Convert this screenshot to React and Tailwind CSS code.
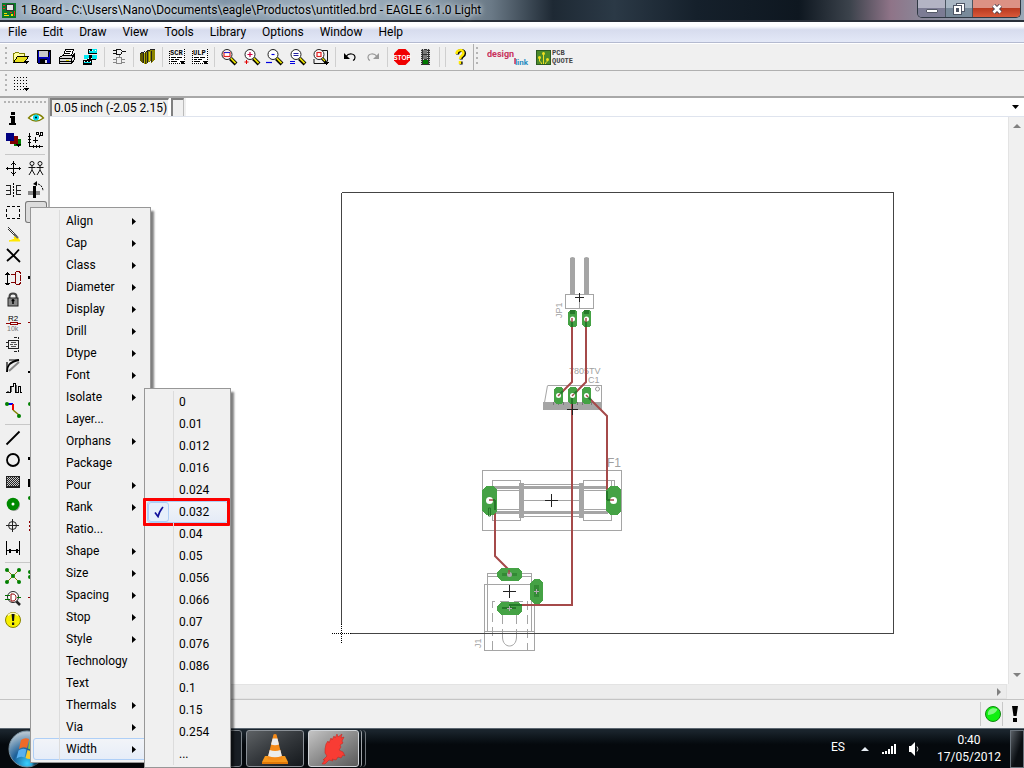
import React from "react";

/* ---------- icon helpers ---------- */

function Icon({ children, smooth }) {
  return (
    <svg
      viewBox="0 0 22 22"
      className="block size-[22px] shrink-0"
      shapeRendering={smooth ? "auto" : "crispEdges"}
      fill="none"
      stroke="none"
      aria-hidden="true"
    >
      {children}
    </svg>
  );
}

const Drop = ({ x = 15, y = 16 }) => (
  <path d={`M${x} ${y}h5v1h-1v1h-1v1h-1v-1h-1v-1h-1z`} fill="#000" />
);

function Magnifier({ children, badge }) {
  return (
    <Icon smooth>
      <path d="M12.500 12.500L18 18" stroke="#000" strokeWidth="4" />
      <path d="M12.700 12.200L17.600 17.100" stroke="#e8e000" strokeWidth="1.800" />
      <circle cx="9" cy="8.500" r="5" fill="#fff" stroke="#222" strokeWidth="1" />
      {children}
      {badge}
    </Icon>
  );
}

const ScriptIcon = ({ label }) => (
  <Icon>
    <rect x="3.500" y="3.500" width="15" height="14" fill="#fff" stroke="#000" strokeDasharray="1 1" />
    <rect x="4" y="3" width="14" height="7" fill="#f6f6f6" />
    <text x="4" y="9" fontSize="7" fontWeight="700" fontFamily="Liberation Mono, monospace" fill="#000">{label}</text>
    <path d="M5 11.500h5M11 11.500h5M5 13.500h3M9 13.500h4M5 15.500h6" stroke="#000" />
    <Drop x={14} y={15} />
  </Icon>
);

/* ---------- top tool bar icons ---------- */

const topTools = [
  { name: "Open", icon: (
    <Icon>
      <path d="M3.500 16V7.500h1l1-1h3l1 1h5v3" fill="#ffffa0" stroke="#808000" />
      <path d="M3.500 16.500l4-6h11l-4 6z" fill="#e8e020" stroke="#000" />
      <Drop x={14} y={15} />
    </Icon>) },
  { name: "Save", icon: (
    <Icon>
      <path d="M4 4h14v14H5l-1-1z" fill="#000" />
      <path d="M5 5h1v12H5zM16 6h1v11h-1zM6 11h10v1H6z" fill="#0000c0" />
      <rect x="6" y="5" width="9" height="6" fill="#c8c8c8" />
      <rect x="5" y="12" width="12" height="5" fill="#0000a0" />
      <rect x="7" y="13" width="7" height="4" fill="#000" />
      <rect x="12" y="14" width="2" height="3" fill="#ddd" />
    </Icon>) },
  { name: "Print", icon: (
    <Icon>
      <path d="M7.500 9.500l2-6h8l-2 6" fill="#fff" stroke="#000" />
      <path d="M10 5.500h5M9 7.500h5" stroke="#000" />
      <path d="M3.500 11.500l3-2h10l2-2v6l-3 4h-12z" fill="#d8d8d8" stroke="#000" />
      <path d="M3 12.500h12M4 15.500h11M15.500 12v5M16 11.500l2-2" stroke="#000" />
      <path d="M10 14h3v1h-3z" fill="#d8d000" />
    </Icon>) },
  { name: "CAM", icon: (
    <Icon>
      <path d="M9 3h9v5H9zM8 9h9v5H8zM4 14h9v5H4z" fill="#000" />
      <path d="M10 5h7v2h-7zM5 16h7v1H5z" fill="#00e8f0" />
      <path d="M5 9h5v4H5zM13 9h5v4h-5zM13 3h5v4h-5z" fill="#00e8f0" />
      <path d="M10 4h1v1h-1zM13 4h1v1h-1zM16 4h1v1h-1zM9 12h1v1H9zM12 12h1v1h-1zM5 15h1v1H5zM8 15h1v1H8zM11 15h1v1h-1z" fill="#fff" />
    </Icon>) },
  null,
  { name: "Schematic", icon: (
    <Icon>
      <path d="M8.500 3.500h4l2 2-2 3h-4zM5 4.500h3M5 7.500h3M15 5.500h3" stroke="#111" />
      <path d="M8.500 11.500h5v6h-5zM5 13.500h3M5 16.500h3M14 13.500h3M14 16.500h3M11.500 9v2" stroke="#888" />
    </Icon>) },
  null,
  { name: "Use library", icon: (
    <Icon>
      <path d="M3 8l3-2v12l-3-3z" fill="#605800" />
      <path d="M6 6l2 2v10l-2-1z" fill="#b8b000" />
      <path d="M8 6l3-2v12l-3 2z" fill="#403c00" />
      <path d="M9 6l5-2v11l-5 3z" fill="#8a8400" />
      <path d="M14 4h4v10l-4 3z" fill="#8a8400" />
      <path d="M6.500 6v11M10.500 6v11M14.500 5v11M3 7.500l5-2M9 6l6-3h3" stroke="#222" />
      <path d="M12.500 6v9" stroke="#d8d000" />
    </Icon>) },
  null,
  { name: "Script", icon: <ScriptIcon label="SCR" /> },
  { name: "User language program", icon: <ScriptIcon label="ULP" /> },
  null,
  { name: "Zoom to fit", icon: (
    <Magnifier><rect x="6" y="6.500" width="6" height="4" stroke="#e02020" strokeWidth="1.2" /><path d="M6 6.500h6" stroke="#2020d0" /></Magnifier>) },
  { name: "Zoom in", icon: (
    <Magnifier badge={<path d="M5.500 14v4M3.500 16h4" stroke="#e00000" />}><path d="M9 6v5M6.500 8.500h5" stroke="#d00040" strokeWidth="1.200" /></Magnifier>) },
  { name: "Zoom out", icon: (
    <Magnifier badge={<path d="M2 16.500h6" stroke="#0000e0" strokeWidth="1.200" />}><path d="M7.500 8.500h3" stroke="#0000e0" strokeWidth="1.200" /></Magnifier>) },
  { name: "Redraw", icon: (
    <Magnifier badge={<path d="M3 15.500h5M3 17.500h5" stroke="#0000e0" />}><path d="M6.500 7.500h5M6.500 9.500h5" stroke="#2020a0" /></Magnifier>) },
  { name: "Zoom select", icon: (
    <Icon smooth>
      <path d="M12 4.500h5.500v11M4 13v4.500h11" stroke="#111" />
      <path d="M12 12l4 4.500" stroke="#000" strokeWidth="3" />
      <path d="M12 12l3 3" stroke="#e8e000" strokeWidth="1.200" />
      <circle cx="9" cy="8.500" r="5" fill="#fff" stroke="#222" />
      <rect x="7" y="6.500" width="4" height="4" stroke="#e02020" strokeWidth="1.200" />
      <Drop x={14} y={16} />
    </Icon>) },
  null,
  { name: "Undo", icon: (
    <Icon smooth>
      <path d="M7 10.500c3-4 9-3 9 1 0 1.500-1 2.500-2 3" stroke="#000" strokeWidth="1.200" />
      <path d="M5 7v6h6z" fill="#000" />
    </Icon>) },
  { name: "Redo", icon: (
    <Icon smooth>
      <path d="M15 10.500c-3-4-9-3-9 1 0 1.500 1 2.500 2 3" stroke="#999" strokeWidth="1.200" />
      <path d="M17 7v6h-6z" fill="#999" />
    </Icon>) },
  null,
  { name: "Stop", icon: (
    <Icon smooth>
      <path d="M7.500 3h7l4.500 4.500v7L14.500 19h-7L3 14.500v-7z" fill="#f00000" />
      <text x="11" y="13.500" textAnchor="middle" fontSize="6.500" fontWeight="700" fontFamily="Liberation Sans, sans-serif" fill="#fff">STOP</text>
    </Icon>) },
  { name: "Go", icon: (
    <Icon>
      <rect x="7" y="3" width="9" height="16" fill="#333" />
      <path d="M7.500 3v16M9.500 3v16M13.500 3v16M15.500 3v16" stroke="#ccc" strokeDasharray="1 1" />
      <rect x="9" y="4" width="4" height="4" fill="#777" />
      <rect x="9" y="9" width="4" height="4" fill="#777" />
      <rect x="9" y="14" width="5" height="4" fill="#007800" />
    </Icon>) },
  null,
  null,
  { name: "Help", icon: (
    <Icon smooth>
      <path d="M8 8c0-5 7-5 7-1 0 3-3.500 2.500-3.500 6M11.500 15v3" stroke="#000" strokeWidth="3" transform="translate(.6 .4)" />
      <path d="M7.500 8c0-5 7-5 7-1 0 3-3.500 2.500-3.500 6M11 15v3" stroke="#ffe800" strokeWidth="2.500" />
    </Icon>) },
];

/* ---------- side tool bar icons, two per row ---------- */

const sideTools = [
  [
    ["Info", <Icon><path d="M9 5h4v3H9zM8 9h5v7h1v2H7v-2h2v-5H8z" fill="#000" /></Icon>],
    ["Show", <Icon smooth><path d="M3.500 11Q11 3 18.500 11Q11 17 3.500 11z" fill="#fff" stroke="#808000" strokeWidth="1.300" /><circle cx="11" cy="10.500" r="3" fill="#00d8e8" /><circle cx="11" cy="10.500" r="1" fill="#000" /></Icon>],
  ],
  [
    ["Display", <Icon><path d="M12 10h7v7h-7z" fill="#008000" /><path d="M8 7h8v8H8z" fill="#800000" /><path d="M4 4h8v8H4z" fill="#000080" /><Drop x={14} y={15} /></Icon>],
    ["Mark", <Icon><path d="M4.500 4v13.500H18M2.500 7.500h3M2.500 10.500h3M2.500 13.500h3M8.500 16v3M11.500 16v3M14.500 16v3M10.500 8v6M8 11.500h5" stroke="#000" /><path d="M11.500 3.500h2v2h-2zM14 6v2M15.500 3.500h2v3h-2z" stroke="#000" /></Icon>],
  ],
  null,
  [
    ["Move", <Icon><path d="M11.500 5v12M5 11.500h13" stroke="#000" /><path d="M10 6h3v1h-3zM11 4h1v2h-1zM10 16h3v1h-3zM11 17h1v2h-1zM6 10v3H5v-3zM5 11v1H4v-1zM17 10v3h1v-3zM18 11v1h1v-1zM9 7h1v1H9zM13 7h1v1h-1zM9 15h1v1H9zM13 15h1v1h-1z" fill="#000" /></Icon>],
    ["Copy", <Icon smooth><g stroke="#111"><circle cx="7" cy="6.500" r="2" /><path d="M7 8.500v5M3.500 10.500h7M7 13l-3 5M7 13l3 5" /><circle cx="15" cy="6.500" r="2" /><path d="M15 8.500v5M11.500 10.500h7M15 13l-3 5M15 13l3 5" /></g></Icon>],
  ],
  [
    ["Mirror", <Icon><path d="M11.500 4v15" stroke="#000" strokeDasharray="2 1" /><path d="M4 6.500h4.500v9H4M4 11.500h4M19 6.500h-4.500v9h4.500M15 11.500h4" stroke="#222" /></Icon>],
    ["Rotate", <Icon smooth><path d="M3 12h12v4H3z" fill="#888" /><path d="M8 7h3v12H8z" fill="#000" /><path d="M10 5c5-1 8 3 8 7" stroke="#000" strokeDasharray="2 1" /><path d="M8 5l4-3v5z" fill="#000" /></Icon>],
  ],
  [
    ["Group", <Icon><rect x="4.500" y="5.500" width="13" height="12" stroke="#000" strokeDasharray="3 2" /></Icon>],
    ["Change", <Icon />, true],
  ],
  [
    ["Cut", <Icon smooth><path d="M6 4l9 9M6 6l7 7" stroke="#333" /><path d="M7 18h11l-3-4h-3l1 2z" fill="#ffe800" stroke="#ffe800" /><path d="M12 11l4 4" stroke="#666" strokeWidth="2" /></Icon>],
    ["Paste", <Icon />],
  ],
  [
    ["Delete", <Icon smooth><path d="M5 4l7 7 6 6M17 4.500L12 10 5 16" stroke="#000" strokeWidth="1.800" /></Icon>],
    ["Add", <Icon />],
  ],
  [
    ["Pinswap", <Icon><path d="M5.500 5v12M3 7h5M4 6h3M3 16h5M4 17h3" stroke="#000" /><path d="M9 7.500h4M9 15.500h4M13.500 5v12M14 4.500h3l2 2M14 17.500h3l2-2M18.500 8v6" stroke="#800000" /></Icon>],
    ["Replace", <Icon><path d="M3 9h4v3H3z" fill="#000" /></Icon>],
  ],
  [
    ["Lock", <Icon smooth><path d="M7.500 10V7.500c0-4 7-4 7 0V10" stroke="#444" strokeWidth="2" /><rect x="6" y="9" width="10" height="8" fill="#888" stroke="#222" /><path d="M11 10v5M9.500 11.500h3" stroke="#000" strokeWidth="1.500" /></Icon>],
    ["Smash", <Icon />],
  ],
  [
    ["Name", <Icon><text x="6" y="10" fontSize="8" fontFamily="Liberation Sans, sans-serif" fill="#000">R2</text><path d="M4 12.500h4M15 12.500h4M8 11.500h7v2H8z" stroke="#900000" /><text x="5" y="20" fontSize="7" fontFamily="Liberation Sans, sans-serif" fill="#777">10k</text></Icon>],
    ["Value", <Icon><path d="M3 11.500h5" stroke="#900000" /></Icon>],
  ],
  [
    ["Text smash", <Icon><path d="M6.500 7.500h10v8h-10zM4 9.500h2M4 13.500h2M12 4.500h3M12 18.500h3M16.500 4v2M16.500 17v2" stroke="#222" /><path d="M9 9h5v1H9zM8 11h3v1H8zM12 11h3v1h-3zM9 13h5v1H9z" fill="#555" /></Icon>],
    ["Attribute", <Icon />],
  ],
  [
    ["Miter", <Icon smooth><path d="M5 17c0-6 2-10 12-12" stroke="#000" strokeWidth="1.800" /><path d="M5 17V7M17 5H7" stroke="#000" strokeWidth="1.200" /><path d="M7 16L17 7" stroke="#888" strokeWidth="2" /></Icon>],
    ["Split", <Icon><path d="M3 16h4v2H3z" fill="#000" /></Icon>],
  ],
  [
    ["Meander", <Icon><path d="M4 15.500h4v-6h3v-3h2v9h3v-6h2v6h2" stroke="#000" strokeWidth="1" /><path d="M5 14.500h2M9.500 10v5M14.500 8v7" stroke="#666" /></Icon>],
    ["Optimize", <Icon />],
  ],
  [
    ["Route", <Icon smooth><path d="M5 5h6" stroke="#0000f0" strokeWidth="2" /><path d="M11 5v6" stroke="#f00000" strokeWidth="2" /><path d="M11 11l6 5" stroke="#808000" strokeWidth="1.500" /><circle cx="5" cy="5" r="2" fill="#008000" /><circle cx="17" cy="17" r="2" fill="#008000" /></Icon>],
    ["Ripup", <Icon smooth><circle cx="5" cy="5" r="2" fill="#008000" /></Icon>],
  ],
  null,
  [
    ["Wire", <Icon smooth><path d="M4.500 17.500l13-13" stroke="#000" strokeWidth="1.800" /></Icon>],
    ["Label", <Icon />],
  ],
  [
    ["Circle", <Icon smooth><circle cx="11" cy="11" r="6" stroke="#000" strokeWidth="1.800" /></Icon>],
    ["Arc", <Icon><path d="M3 8h2v3H3z" fill="#000" /></Icon>],
  ],
  [
    ["Rect", <Icon><rect x="4" y="5" width="14" height="12" fill="#222" /><path d="M5 6.500h12M5 8.500h12M5 10.500h12M5 12.500h12M5 14.500h12" stroke="#ccc" strokeDasharray="1 1" /><path d="M6 7.500h12M6 9.500h12M6 11.500h12M6 13.500h12" stroke="#ccc" strokeDasharray="1 1" /></Icon>],
    ["Polygon", <Icon><path d="M4 8v8" stroke="#000" strokeWidth="2" /></Icon>],
  ],
  [
    ["Via", <Icon smooth><circle cx="12" cy="12" r="6" fill="#999" /><circle cx="11" cy="11" r="6.300" fill="#008a00" /><circle cx="11" cy="11" r="1.500" fill="#fff" /></Icon>],
    ["Signal", <Icon smooth><circle cx="5" cy="5" r="2" fill="#008000" /></Icon>],
  ],
  [
    ["Hole", <Icon smooth><circle cx="10.500" cy="10.500" r="4" stroke="#222" /><path d="M10.500 4v13M4 10.500h13" stroke="#222" /></Icon>],
    ["Attribute", <Icon><path d="M4.500 6v12" stroke="#900000" strokeDasharray="2 2" /></Icon>],
  ],
  [
    ["Dimension", <Icon><path d="M4.500 4v14M17.500 4v14M5 13.500h12M7 12h1v3H7zM14 12h1v3h-1z" stroke="#000" /></Icon>],
    ["Text", <Icon />],
  ],
  null,
  [
    ["Ratsnest", <Icon smooth><path d="M5 5l12 12M17 5L5 17" stroke="#808000" /><g fill="#008000"><circle cx="5" cy="5" r="2" /><circle cx="17" cy="5" r="2" /><circle cx="11" cy="11" r="2" /><circle cx="5" cy="17" r="2" /><circle cx="17" cy="17" r="2" /></g></Icon>],
    ["Auto", <Icon smooth><circle cx="5" cy="7" r="2" fill="#008000" /><circle cx="5" cy="12" r="2" fill="#008000" /></Icon>],
  ],
  [
    ["ERC", <Icon smooth><path d="M14 14l4 4" stroke="#222" strokeWidth="2.500" /><circle cx="11" cy="10" r="5.500" fill="#fff" stroke="#222" /><path d="M3 8.500h5M3 12.500h5M15 10.500h4" stroke="#007000" /><path d="M9 7h2c4 0 4 7 0 7H9z" stroke="#900000" /></Icon>],
    ["DRC", <Icon><path d="M3 10.500h5" stroke="#900000" /></Icon>],
  ],
  [
    ["Errors", <Icon smooth><circle cx="11" cy="11" r="7.500" fill="#f8f000" stroke="#8a8400" /><path d="M6 6.500c2-3 8-3 10 0" stroke="#fffbc0" strokeWidth="1.500" /><path d="M9.600 5h3l-.6 7h-1.800zM10 13.500h2.200v2.500H10z" fill="#111" /></Icon>],
  ],
];

/* ---------- menus ---------- */

const menuBar = ["File", "Edit", "Draw", "View", "Tools", "Library", "Options", "Window", "Help"];

const changeMenu = [
  ["Align", 1], ["Cap", 1], ["Class", 1], ["Diameter", 1], ["Display", 1], ["Drill", 1],
  ["Dtype", 1], ["Font", 1], ["Isolate", 1], ["Layer...", 0], ["Orphans", 1], ["Package", 0],
  ["Pour", 1], ["Rank", 1], ["Ratio...", 0], ["Shape", 1], ["Size", 1], ["Spacing", 1],
  ["Stop", 1], ["Style", 1], ["Technology", 0], ["Text", 0], ["Thermals", 1], ["Via", 1], ["Width", 1],
];

const widths = [
  "0", "0.01", "0.012", "0.016", "0.024", "0.032", "0.04", "0.05", "0.056",
  "0.066", "0.07", "0.076", "0.086", "0.1", "0.15", "0.254", "...",
];

function ChangeMenu() {
  return (
    <ul role="menu" aria-label="Change" className="absolute left-[30px] top-[207px] w-[121px] border border-[#979797] bg-[#f0f0f0] p-0.5 shadow-[3px_4px_2px_rgba(0,0,0,0.5)]">
      {changeMenu.map(([label, sub]) => (
        <li key={label} role="none" className="flex">
          <button
            role="menuitem"
            className={
              "flex h-[22px] w-full items-center rounded-[3px] border pr-[11px] text-left " +
              (label === "Width" ? "border-[#aecff7] bg-gradient-to-b from-[#f2f4f8] to-[#e6edf8]" : "border-transparent")
            }
          >
            <span className="mr-1.5 h-[22px] w-[26px] border-r border-[#dcdcdc]" />
            <span className="flex-1">{label}</span>
            {sub ? (
              <svg viewBox="0 0 4 7" className="h-[7px] w-1" aria-hidden="true"><path d="M0 0l4 3.500L0 7z" /></svg>
            ) : null}
          </button>
        </li>
      ))}
    </ul>
  );
}

function WidthMenu() {
  return (
    <ul role="menu" aria-label="Width" className="absolute left-[144px] top-[388px] w-[87px] border border-[#979797] bg-[#f0f0f0] p-0.5 shadow-[3px_4px_2px_rgba(0,0,0,0.5)]">
      {widths.map((w) => {
        const on = w === "0.032";
        return (
          <li key={w} role="none" className="relative flex">
            <button
              role="menuitemradio"
              aria-checked={on}
              className={
                "flex h-[22px] w-full items-center rounded-[3px] border text-left " +
                (on ? "border-[#aecff7] bg-gradient-to-b from-[#f2f4f8] to-[#e4ebf7]" : "border-transparent")
              }
            >
              <span
                className={
                  "mr-[5px] flex h-[22px] w-[26px] items-center border-r " +
                  (on ? "border-transparent" : "border-[#dcdcdc]")
                }
              >
                {on && (
                  <span className="flex h-[20px] w-[21px] items-center justify-center rounded-[3px] border border-[#aecff7] bg-[#e6effb]">
                    <svg viewBox="0 0 10 12" className="h-3 w-2.5" aria-hidden="true">
                      <path d="M1 6.500l3 4Q5.500 5 9 1" fill="none" stroke="#10109a" strokeWidth="1.700" />
                    </svg>
                  </span>
                )}
              </span>
              <span>{w}</span>
            </button>
            {on && <span className="pointer-events-none absolute -bottom-[3px] -left-1 -right-0.5 -top-[3px] rounded-[1px] border-[3px] border-[#fc0000]" />}
          </li>
        );
      })}
    </ul>
  );
}

/* ---------- board drawing ---------- */

const Cross = ({ x, y, r = 5 }) => (
  <path d={`M${x - r - 0.5} ${y}h${2 * r + 1}M${x} ${y - r - 0.5}v${2 * r + 1}`} stroke="#222" />
);

const TallPad = ({ x, y, w, h, c }) => (
  <path d={`M${x + c} ${y}h${w - 2 * c}l${c} ${c}v${h - 2 * c}l${-c} ${c}h${-(w - 2 * c)}l${-c} ${-c}v${-(h - 2 * c)}z`} fill="#45a245" />
);

function Board() {
  return (
    <svg viewBox="330 185 570 470" className="ml-[280px] mt-[68px] block h-[470px] w-[570px] shrink-0" fill="none" role="img" aria-label="Board layout">
      <g shapeRendering="crispEdges">
        <path d="M341.500 192.500H893.500V633.500H351M341.500 192.500V624" stroke="#444" />
        <path d="M332 633.500h20M341.500 624v19" stroke="#000" strokeDasharray="1 1" />

        <g stroke="#a5a5a5">
          <path d="M572.500 258v36M586.500 258v36" strokeWidth="5" />
          <path d="M565.500 294.500h28v14h-28zM579.500 300v8M547.500 385.500h53.500v17" />
          <path d="M482.500 470.500h139v60h-139zM492.500 480.500h28v40h-28zM583.500 480.500h28v40h-28z" />
          <path d="M493 487.500h115M493 512.500h115" strokeWidth="3" />
          <path d="M521.500 483v35M581.500 483v35" strokeWidth="5" />
          <path d="M524 484.500h55M524 516.500h55M524 500.500h55M497 490.500h23M497 509.500h23M583 490.500h24M583 509.500h24M611 480.500h3.500v12" />
          <path d="M487.500 631V573.500h44V631M487.500 576.500h44M484.500 584.500h50v66h-50zM484 631.500h50" />
          <path d="M492.500 650v-49h35v49M502.500 638v-37M516.500 638v-37" strokeDasharray="9 5" />
        </g>
        <path d="M543 402h59v8h-59z" fill="#a5a5a5" />
        <path d="M553.500 402v3M558.500 402v3M563.500 402v3M577.500 402v3M582.500 402v3M591.500 402v3" stroke="#777" />
        <path d="M484 633.500h51" stroke="#444" />
      </g>
      <path d="M570 259q0-2 2.500-2t2.500 2zM584 259q0-2 2.500-2t2.500 2z" fill="#a5a5a5" />
      <path d="M547.500 385.500l-3 17M502.500 637c0 12 14 12 14 0" stroke="#a5a5a5" />
      <circle cx="597.500" cy="389" r="2" stroke="#999" />

      <g fill="#a0a0a0" fontFamily="Liberation Sans, sans-serif" fontSize="9">
        <text x="569" y="374">7805TV</text>
        <text x="588" y="383">C1</text>
        <text x="607" y="467" fontSize="12">F1</text>
        <text transform="translate(562 318) rotate(-90)">JP1</text>
        <text transform="translate(481 648) rotate(-90)">J1</text>
      </g>

      <g stroke="#a54a4a" strokeWidth="2">
        <path d="M572 318v64l-14 14M586 318v64l-14 14v209h-62M586 395l21 21v84h6M489 500h6v56l14 14" />
      </g>

      <g shapeRendering="crispEdges">
        {[572.5, 586.5].map((x) => <TallPad key={x} x={x - 4.5} y={310} w={9} h={17} c={2} />)}
        {[558.5, 572.5, 586.5].map((x) => <TallPad key={x} x={x - 4.5} y={387} w={9} h={17} c={2} />)}
        <TallPad x={482} y={486} w={15} h={29} c={4} />
        <TallPad x={606} y={486} w={15} h={29} c={4} />
        <TallPad x={497} y={568} w={25} h={13} c={4} />
        <TallPad x={497} y={602} w={25} h={13} c={4} />
        <TallPad x={530} y={579} w={13} h={25} c={4} />
        <path d="M570 310h5v4h-5zM584 310h5v4h-5z" fill="#26782a" />
        <path d="M534 585h5v12h-5z" fill="#338a35" />
        <path d="M502 573h15v3h-15z" fill="#338a35" />
      </g>
      <g stroke="#26782a" strokeWidth="2">
        <path d="M572 318v9M586 318v9M572 396v8M558 396l5-5M572 396l5-5M586 395l5 5M495 500v10M607 500v-9M495 500h-6M607 500h6M510 608v-3h12M502 608h14" />
        <path d="M488.500 508v8h2v-8z" strokeWidth="1" />
      </g>
      <g fill="#fff">
        <circle cx="572.500" cy="319" r="2.500" /><circle cx="586.500" cy="319" r="2.500" />
        <circle cx="558.500" cy="395.500" r="2.500" /><circle cx="572.500" cy="395.500" r="2.500" /><circle cx="586.500" cy="395.500" r="2.500" />
        <circle cx="489.500" cy="500.500" r="3.500" /><circle cx="613.500" cy="500.500" r="3.500" />
      </g>
      <circle cx="509.500" cy="574.500" r="2.500" fill="#b0a8b0" />
      <path d="M534 591.500h5M536.500 589v5M507 608.500h5M509.500 606v5" stroke="#b5a8b5" />
      <path d="M572 318v4M586 318v4M558 396l2-2M572 396l2-2M586 395l2 2M489 500h4M610 500h4M509 570v4" stroke="#a54a4a" strokeWidth="1.500" />
      <g shapeRendering="crispEdges">
        <Cross x={579.5} y={297.5} r={4} />
        <Cross x={572.5} y={409.5} />
        <Cross x={551.5} y={500.5} r={6} />
        <Cross x={509.5} y={591.5} r={6} />
      </g>
    </svg>
  );
}

/* ---------- chrome pieces ---------- */

const Grip = () => (
  <span className="mx-[5px] h-[20px] w-[2px] bg-[repeating-linear-gradient(to_bottom,#b4b4b4_0px,#b4b4b4_2px,transparent_2px,transparent_5px)]" />
);

const Separator = () => (
  <span className="flex h-5 w-[6px] justify-center"><span className="w-px bg-[#cfcfcf]" /></span>
);

function TitleBar() {
  return (
    <header className="flex h-[22px] items-start justify-between border-b-2 border-[#2a3038] bg-[linear-gradient(to_right,#8fa3b5_0%,#b3c6d6_12%,#8094a6_22%,#a3b4c2_32%,#8a9cab_42%,#6a7986_48%,#1e2934_54%,#2b3946_60%,#15202b_68%,#0e1720_78%,#3c434c_83%,#8f7488_87%,#8a8798_90%,#9aa9b8_100%)]">
      <div className="flex h-5 items-center">
        <svg viewBox="0 0 16 16" className="ml-px mr-1 size-4" shapeRendering="crispEdges" aria-hidden="true">
          <rect width="14" height="15" x="1" y="1" fill="#0a7a28" />
          <rect x="5" y="2" width="7" height="6" fill="#e8e8e8" stroke="#333" />
          <path d="M3 11h3v1H3zM3 13h5v1H3zM10 12h2v2h-2z" fill="#f8e000" />
          <path d="M2 3h2v1H2zM2 6h2v1H2zM13 9h1v5h-1zM9 10h2v1H9z" fill="#f02020" />
        </svg>
        <h1 className="text-xs text-black [text-shadow:0_0_6px_rgba(255,255,255,0.9),0_0_4px_rgba(255,255,255,0.6)]">
          1 Board - C:\Users\Nano\Documents\eagle\Productos\untitled.brd - EAGLE 6.1.0 Light
        </h1>
      </div>
      <div className="mr-[3px] flex h-[18px] overflow-hidden rounded-b-[5px] border border-t-0 border-[#2f3843]">
        <button aria-label="Minimize" className="flex w-7 items-center justify-center border-r border-[#4a5560] bg-gradient-to-b from-[#b3b4c4] from-45% to-[#7c7c94] to-50%">
          <span className="mt-1 h-1 w-3 rounded-[1px] border border-[#555a68] bg-white" />
        </button>
        <button aria-label="Restore" className="flex w-[27px] items-center justify-center border-r border-[#4a5560] bg-gradient-to-b from-[#a9b7c4] from-45% to-[#788a9a] to-50%">
          <svg viewBox="0 0 12 12" className="size-3" shapeRendering="crispEdges" fill="none" aria-hidden="true">
            <path d="M3 0h9v9H3z" fill="#4d5564" /><path d="M4 1h7v7H4z" fill="#fff" />
            <path d="M0 2h9v10H0z" fill="#4d5564" /><path d="M1 3h7v8H1z" fill="#fff" /><path d="M3 5h3v4H3z" fill="#4d5564" />
          </svg>
        </button>
        <button aria-label="Close" className="flex w-[47px] items-center justify-center bg-gradient-to-b from-[#dc9184] from-45% via-[#b93a20] via-50% to-[#d9593a]">
          <svg viewBox="0 0 12 10" className="h-2.5 w-3" aria-hidden="true">
            <path d="M2.500 1.500l7 7M9.500 1.500l-7 7" stroke="#50434f" strokeWidth="4.500" /><path d="M2.500 1.500l7 7M9.500 1.500l-7 7" stroke="#fff" strokeWidth="2.700" />
          </svg>
        </button>
      </div>
    </header>
  );
}

function TopToolBar() {
  return (
    <div className="flex h-[28px] items-center border-b border-[#b0b0b0] border-t border-t-white">
      <span className="-mr-[3px] flex"><Grip /></span>
      {topTools.map((t, i) =>
        t ? (
          <button key={i} aria-label={t.name} className="flex w-[23px] justify-center">{t.icon}</button>
        ) : (
          <Separator key={i} />
        )
      )}
      <span className="ml-0.5 h-full w-px bg-[#b0b0b0]" />
      <span className="-ml-[3px] flex"><Grip /></span>
      <button aria-label="design link" className="ml-1 flex">
        <svg viewBox="0 0 42 22" className="h-[22px] w-[42px]" fontFamily="Roboto, sans-serif" fontWeight="700" aria-hidden="true">
          <text x="0" y="11" fontSize="9" fill="#c8325c">design</text>
          <text x="28" y="19" fontSize="8" fill="#2a8cc0">link</text>
          <path d="M28 12v6" stroke="#c8325c" strokeWidth="1.500" />
        </svg>
      </button>
      <button aria-label="PCB quote" className="ml-[7px] flex items-center">
        <svg viewBox="0 0 15 15" className="size-[15px]" aria-hidden="true">
          <rect width="15" height="15" fill="#4c8a2a" /><rect x="0.500" y="0.500" width="14" height="14" fill="none" stroke="#2c5a22" />
          <path d="M7.500 14V4M3.500 8v3l2 2v1M11.500 10v1l-2 2v1" stroke="#f0e020" fill="none" />
          <circle cx="7.500" cy="3.500" r="1.500" fill="#f0e020" /><circle cx="3.500" cy="7.500" r="1.500" fill="#f0e020" /><circle cx="11.500" cy="9.500" r="1.500" fill="#f0e020" />
        </svg>
        <span className="ml-px text-left font-['Liberation_Mono',monospace] text-[7px] font-bold leading-[8px] text-[#444]">PCB<br />QUOTE</span>
      </button>
    </div>
  );
}

function SideToolBar() {
  return (
    <aside className="flex w-[50px] shrink-0 flex-col border-r-2 border-[#b4b4b4] pl-0.5">
      <span className="mb-1 ml-0.5 mt-[3px] h-[2px] w-[42px] bg-[repeating-linear-gradient(to_right,#b4b4b4_0px,#b4b4b4_2px,transparent_2px,transparent_4px)]" />
      {sideTools.map((row, i) =>
        row ? (
          <div key={i} className="flex gap-px">
            {row.map(([name, icon, pressed]) => (
              <button
                key={name}
                aria-label={name}
                className={pressed ? "flex size-[22px] items-center justify-center rounded-[3px] bg-[#dcdcdc] ring-1 ring-inset ring-[#777]" : "flex"}
              >
                {icon}
              </button>
            ))}
          </div>
        ) : (
          <span key={i} className="ml-[3px] flex h-[6px] w-10 items-center"><span className="h-px w-full bg-[#c8c8c8]" /></span>
        )
      )}
    </aside>
  );
}

function TaskBar() {
  return (
    <footer className="flex h-10 shrink-0 items-center border-t border-[#5b6670] bg-gradient-to-b from-[#1a242c] from-5% to-[#05090d] to-40% text-white">
      <button aria-label="Start" className="ml-2 flex">
        <svg viewBox="0 0 38 38" className="size-[38px]" aria-hidden="true">
          <defs>
            <radialGradient id="orb" cx="50%" cy="90%" r="85%">
              <stop offset="0" stopColor="#38d0ff" /><stop offset="0.450" stopColor="#1c5f98" /><stop offset="1" stopColor="#b4c4d0" />
            </radialGradient>
          </defs>
          <circle cx="19" cy="19" r="18" fill="url(#orb)" stroke="#7890a0" />
          <path d="M13 10q4-3 8-1l-2 9q-4-2-8 1z" fill="#f06a28" /><path d="M22 9.500q4 2 8 0l-2 9q-4 2-8 0z" fill="#88c040" />
          <path d="M10.500 20.500q4-3 8-1l-2 8q-4-2-8 1z" fill="#58b0f0" /><path d="M19.500 20q4 2 8 0l-2 8q-4 2-8 0z" fill="#f8c830" />
        </svg>
      </button>
      <span className="ml-[138px] h-[37px] w-[58px] rounded-[3px] border border-[#7b8288] bg-[#181e24]" />
      <button aria-label="VLC media player" className="ml-1 flex h-[37px] w-[58px] items-center justify-center rounded-[3px] border border-[#8b9197] bg-gradient-to-br from-[#5e6265] via-[#34383c] to-[#15191d]">
        <svg viewBox="0 0 28 32" className="h-8 w-7" aria-hidden="true">
          <path d="M4 23h20l3 6H1z" fill="#f8981c" /><path d="M1 29h26v2H1z" fill="#e07808" />
          <path d="M12.500 1.500q1.500-1 3 0L21.500 26q-7.500 3-15 0z" fill="#f58a18" />
          <path d="M11.600 5.500h4.900l1.500 6q-4 1.500-8 0zM8.700 17q5.500 2 10.700 0l1.500 6q-7 2.500-13.800 0z" fill="#ececec" />
        </svg>
      </button>
      <button aria-label="EAGLE" className="ml-1 flex h-[37px] w-[51px] items-center justify-center rounded-[3px] border border-[#d0d4d8] bg-gradient-to-br from-[#c4c4c4] via-[#8c8c8c] to-[#5a5a5a]">
        <svg viewBox="0 0 26 34" className="h-[34px] w-[26px]" aria-hidden="true">
          <path d="M13 4L14 6 16 2 17 5 21 2 20 6 23 5 21 9 22 11 19 13 20 15 18 18 22 20 24 24 22 23 20 26 17 25 15 28 11 27 12 29 8 28 4 32 1 32 4 28 2 28 6 24 4 21 4 17 5 12 7 9 8 11 10 6 11 8z" fill="#f83c34" stroke="#c42018" strokeWidth=".5" />
        </svg>
      </button>
      <span className="h-[37px] w-[3px] rounded-r border-r border-[#a0a4a8]" />
      <span className="h-[37px] w-1 rounded-r border-r border-[#70767c]" />
      <div className="ml-auto flex items-center">
        <span className="mb-1 text-xs leading-4">ES</span>
        <button aria-label="Show hidden icons" className="ml-4">
          <svg viewBox="0 0 8 4" className="h-1 w-2" fill="#e8eef4" aria-hidden="true"><path d="M4 0l4 4H0z" /></svg>
        </button>
        <svg viewBox="0 0 15 12" className="ml-[13px] h-3 w-[15px]" fill="#fff" shapeRendering="crispEdges" aria-hidden="true">
          <path d="M0 9h2v2H0zM3 8h2v3H3zM6 6h2v5H6zM9 3h2v8H9zM12 1h2v10h-2z" />
        </svg>
        <svg viewBox="0 0 14 14" className="ml-[11px] size-3.5" fill="none" aria-hidden="true">
          <path d="M1 4h2l4-4v14l-4-4H1z" fill="#fff" /><path d="M9 4.500q2 2.500 0 5" stroke="#ddd" />
        </svg>
        <div className="ml-[14px] w-[66px] whitespace-nowrap text-center text-xs leading-[17px]">
          <div>0:40</div>
          <div>17/05/2012</div>
        </div>
        <button aria-label="Show desktop" className="ml-2 h-[38px] w-[14px] border border-[#6a737b] bg-gradient-to-br from-[#5a6066] to-[#0a0e12] to-60%" />
      </div>
    </footer>
  );
}

export default function App() {
  return (
    <div className="relative flex h-screen flex-col overflow-hidden bg-[#f0f0f0] font-['Roboto','Noto_Sans',sans-serif] text-xs text-black">
      <TitleBar />
      <nav className="flex h-[21px] shrink-0 items-center border-b border-[#b4bad0] bg-gradient-to-b from-white from-20% via-[#d7dcee] via-40% to-[#e3e8f7]">
        {menuBar.map((m) => (
          <button key={m} className="px-2">{m}</button>
        ))}
      </nav>
      <TopToolBar />
      <div className="flex h-[27px] shrink-0 items-center border-b-2 border-[#a8a8a8]">
        <Grip />
        <button aria-label="Grid" className="flex">
          <Icon>
            <path d="M2 4.500h14M2 7.500h14M2 10.500h14M2 13.500h14M2 16.500h10" stroke="#000" strokeDasharray="1 2" />
            <Drop x={12} y={15} />
          </Icon>
        </button>
      </div>

      <div className="flex min-h-0 flex-1">
        <SideToolBar />
        <main className="flex min-w-0 flex-1 flex-col">
          <div className="flex h-[19px] shrink-0 border-b border-[#dfe4ee] bg-white">
            <output className="w-[119px] whitespace-nowrap border-2 border-b-0 border-r border-[#808080] border-r-white bg-[#f0f0f0] pl-0.5 leading-4">0.05 inch (-2.05 2.15)</output>
            <span className="ml-0.5 w-[13px] border-2 border-b-0 border-r border-[#808080] border-r-[#bbb] bg-[#f0f0f0]" />
            <span className="w-0.5 bg-[#f0f0f0]" />
            <input aria-label="Command" className="min-w-0 flex-1 bg-white px-1 outline-none" />
            <button aria-label="Command history" className="flex w-[18px] items-center justify-center">
              <svg viewBox="0 0 7 4" className="h-1 w-[7px]" aria-hidden="true"><path d="M0 0h7L3.500 4z" /></svg>
            </button>
          </div>
          <div className="flex min-h-0 flex-1">
            <div className="min-w-0 flex-1 overflow-hidden bg-white"><Board /></div>
            <div className="flex w-4 shrink-0 flex-col items-center justify-between border-l border-[#e3e3e3] bg-[#f0f0f0] py-[7px]">
              <svg viewBox="0 0 8 4" className="h-1 w-2" fill="#808080" aria-hidden="true"><path d="M4 0l4 4H0z" /></svg>
              <svg viewBox="0 0 8 4" className="h-1 w-2" fill="#808080" aria-hidden="true"><path d="M0 0h8L4 4z" /></svg>
            </div>
          </div>
          <div className="mr-[17px] flex h-[15px] shrink-0 items-center justify-end border border-[#e3e3e3] bg-[#ececec] pr-[5px]">
            <svg viewBox="0 0 4 8" className="h-2 w-1" fill="#808080" aria-hidden="true"><path d="M0 0l4 4-4 4z" /></svg>
          </div>
        </main>
      </div>

      <div className="flex h-[29px] shrink-0 items-center justify-end border-t border-[#c4c4c4]">
        <span className="h-6 w-px bg-[#c8c8c8]" />
        <svg viewBox="0 0 18 18" className="ml-[3px] size-[18px]" aria-hidden="true">
          <circle cx="9" cy="9" r="7.500" fill="#10f010" stroke="#108810" /><path d="M4 10C3 4 9 2 13 4 14 6 9 10 4 10z" fill="#80f880" />
        </svg>
        <span className="h-6 w-px bg-[#c8c8c8]" />
        <svg viewBox="0 0 6 16" className="ml-[9px] mr-1.5 h-4 w-1.5" aria-hidden="true"><path d="M0 0h6L4.500 10h-3zM1 12h4v4H1z" /></svg>
      </div>
      <TaskBar />
      <ChangeMenu />
      <WidthMenu />
    </div>
  );
}
